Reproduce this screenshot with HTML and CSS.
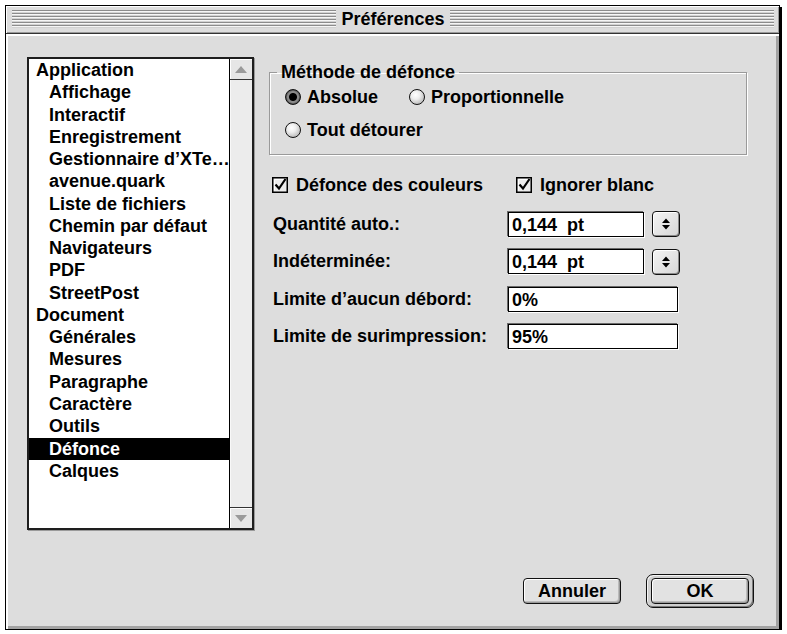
FILE: index.html
```html
<!DOCTYPE html>
<html lang="fr">
<head>
<meta charset="utf-8">
<title>Préférences</title>
<link rel="stylesheet" href="styles.css">
</head>
<body>
<div class="window">
  <div class="titlebar">
    <div class="stripes"><span class="title">Préférences</span></div>
  </div>
  <div class="body">
    <div class="listbox">
      <div class="list">
        <div class="item">Application</div>
        <div class="item child">Affichage</div>
        <div class="item child">Interactif</div>
        <div class="item child">Enregistrement</div>
        <div class="item child">Gestionnaire d’XTe…</div>
        <div class="item child">avenue.quark</div>
        <div class="item child">Liste de fichiers</div>
        <div class="item child">Chemin par défaut</div>
        <div class="item child">Navigateurs</div>
        <div class="item child">PDF</div>
        <div class="item child">StreetPost</div>
        <div class="item">Document</div>
        <div class="item child">Générales</div>
        <div class="item child">Mesures</div>
        <div class="item child">Paragraphe</div>
        <div class="item child">Caractère</div>
        <div class="item child">Outils</div>
        <div class="item child sel">Défonce</div>
        <div class="item child">Calques</div>
      </div>
      <div class="scrollbar">
        <div class="arrow up"><svg width="12" height="7" viewBox="0 0 12 7"><path d="M0 7 L6 0 L12 7 Z" fill="#9a9a9a"/></svg></div>
        <div class="track"></div>
        <div class="arrow down"><svg width="12" height="7" viewBox="0 0 12 7"><path d="M0 0 L6 7 L12 0 Z" fill="#9a9a9a"/></svg></div>
      </div>
    </div>

    <div class="panel">
      <fieldset class="group">
        <legend>Méthode de défonce</legend>
        <div class="radiorow">
          <label class="opt"><span class="radio on"></span>Absolue</label>
          <label class="opt"><span class="radio"></span>Proportionnelle</label>
        </div>
        <div class="radiorow second">
          <label class="opt"><span class="radio"></span>Tout détourer</label>
        </div>
      </fieldset>

      <div class="checkrow">
        <label class="opt check"><svg class="cb" width="16" height="16" viewBox="0 0 16 16"><rect x="0.75" y="0.75" width="14.5" height="14.5" fill="#ececec" stroke="#000" stroke-width="1.5"/><path d="M2.5 2.5 H13.5 M2.5 2.5 V13.5" stroke="#fff" stroke-width="1"/><path d="M3.5 7.5 L7 11.5 L13.5 2" fill="none" stroke="#000" stroke-width="2.2"/></svg>Défonce des couleurs</label>
        <label class="opt check"><svg class="cb" width="16" height="16" viewBox="0 0 16 16"><rect x="0.75" y="0.75" width="14.5" height="14.5" fill="#ececec" stroke="#000" stroke-width="1.5"/><path d="M2.5 2.5 H13.5 M2.5 2.5 V13.5" stroke="#fff" stroke-width="1"/><path d="M3.5 7.5 L7 11.5 L13.5 2" fill="none" stroke="#000" stroke-width="2.2"/></svg>Ignorer blanc</label>
      </div>

      <div class="form">
        <div class="row">
          <span class="label">Quantité auto.:</span>
          <span class="field short">0,144  pt</span>
          <span class="stepper"><svg width="10" height="14" viewBox="0 0 10 14"><path d="M1 6 L5 1.5 L9 6 Z M1 8 L5 12.5 L9 8 Z" fill="#000"/></svg></span>
        </div>
        <div class="row">
          <span class="label">Indéterminée:</span>
          <span class="field short">0,144  pt</span>
          <span class="stepper"><svg width="10" height="14" viewBox="0 0 10 14"><path d="M1 6 L5 1.5 L9 6 Z M1 8 L5 12.5 L9 8 Z" fill="#000"/></svg></span>
        </div>
        <div class="row">
          <span class="label">Limite d’aucun débord:</span>
          <span class="field long">0%</span>
        </div>
        <div class="row">
          <span class="label">Limite de surimpression:</span>
          <span class="field long">95%</span>
        </div>
      </div>

      <div class="buttons">
        <button class="btn">Annuler</button>
        <span class="default"><button class="btn">OK</button></span>
      </div>
    </div>
  </div>
</div>
</body>
</html>
```
FILE: styles.css
```css
* { box-sizing: border-box; }
html, body { margin: 0; background: #fff; }
body {
  font-family: "Liberation Sans", Arial, sans-serif;
  font-weight: bold;
  font-size: 18px;
  color: #000;
}

.window {
  margin: 5px 0 0 5px;
  width: 775px;
  height: 625px;
  border: 1px solid #000;
  box-shadow: 2px 2px 0 #000;
  background: #dddddd;
  display: flex;
  flex-direction: column;
}

.titlebar {
  height: 28px;
  padding: 4px 5px 0 6px;
  border-bottom: 1px solid #333;
  box-shadow: inset 1px 1px 0 #fff, inset -1px -1px 0 #999;
  flex: none;
}
.stripes {
  height: 18px;
  display: flex;
  align-items: center;
  justify-content: center;
  background: repeating-linear-gradient(to bottom, #8c8c8c 0 1px, #f6f6f6 1px 2px, #d2d2d2 2px 3px);
}
.title {
  background: #dddddd;
  padding: 0 5px;
  line-height: 18px;
}

.body {
  flex: 1;
  display: flex;
  align-items: flex-start;
  gap: 15px;
  padding: 23px 25px 21px 21px;
  box-shadow: inset 2px 2px 0 #fff, inset -3px -3px 0 #a2a2a2;
}

.listbox {
  width: 227px;
  height: 473px;
  border: 2px solid #1e1e1e;
  box-shadow: 1px 1px 0 #9a9a9a;
  display: flex;
  background: #fff;
  flex: none;
}
.list {
  width: 200px;
  padding-top: 0;
  overflow: hidden;
}
.item {
  line-height: 22.28px;
  height: 22.28px;
  padding-left: 7px;
  white-space: nowrap;
}
.item.child { padding-left: 20px; }
.item.sel { background: #000; color: #fff; }

.scrollbar {
  flex: 1;
  border-left: 1px solid #000;
  background: #eaeaea;
  display: flex;
  flex-direction: column;
}
.arrow {
  height: 21px;
  display: flex;
  align-items: center;
  justify-content: center;
  background: #e6e6e6;
  box-shadow: inset 1px 1px 0 #fff;
}
.arrow.up { border-bottom: 1px solid #333; }
.arrow.down { border-top: 1px solid #333; }
.track { flex: 1; background: #ececec; box-shadow: inset 1px 0 0 #f8f8f8; }

.panel {
  width: 485px;
  align-self: stretch;
  display: flex;
  flex-direction: column;
}

.group {
  margin: 4px 0 0 0;
  width: 478px;
  border: 1px solid #9a9a9a;
  box-shadow: inset 1px 1px 0 #fff, 1px 1px 0 #fff;
  padding: 3px 15px 13px 15px;
  min-inline-size: 0;
}
.group legend {
  padding: 0 4px;
  margin-left: -8px;
  line-height: 22px;
}

.radiorow {
  display: flex;
  align-items: center;
  gap: 31px;
  height: 22px;
}
.radiorow.second { margin-top: 11px; }

.opt {
  display: flex;
  align-items: center;
  gap: 6px;
  line-height: 22px;
  white-space: nowrap;
}
.radio {
  width: 16px;
  height: 16px;
  border-radius: 50%;
  border: 1px solid #111;
  background: radial-gradient(circle at 40% 35%, #ffffff 0, #eeeeee 35%, #a8a8a8 95%);
  flex: none;
}
.radio.on {
  background: radial-gradient(circle, #000 0 3.5px, #8a8a8a 4.5px 5.5px, #4a4a4a 7px);
}

.checkrow {
  display: flex;
  gap: 33px;
  margin-top: 19px;
  padding-left: 3px;
  height: 22px;
}
.opt.check { gap: 8px; }
.cb { flex: none; }

.form {
  margin-top: 15px;
  padding-left: 4px;
  display: flex;
  flex-direction: column;
  gap: 11.67px;
}
.row {
  display: flex;
  align-items: center;
  height: 26px;
}
.label { width: 235px; white-space: nowrap; }
.field {
  height: 25px;
  background: #fff;
  border: 1px solid #000;
  box-shadow: -1px -1px 0 #6a6a6a, 1px 1px 0 #fff;
  padding-left: 3px;
  line-height: 25px;
  white-space: pre;
}
.field.short { width: 136px; }
.field.long { width: 170px; }
.stepper {
  margin-left: 8px;
  width: 28px;
  height: 26px;
  border: 1px solid #111;
  border-radius: 4px;
  background: linear-gradient(135deg, #f4f4f4, #d6d6d6);
  box-shadow: inset 1px 1px 0 #fff, inset -1px -1px 0 #8a8a8a;
  display: flex;
  align-items: center;
  justify-content: center;
}

.buttons {
  margin-top: auto;
  display: flex;
  justify-content: flex-end;
  align-items: center;
  gap: 25px;
}
.btn {
  font: inherit;
  color: #000;
  width: 98px;
  height: 26px;
  border: 1px solid #111;
  border-radius: 4px;
  background: #e2e2e2;
  box-shadow: inset 1px 1px 0 #fff, inset -1px -1px 0 #999, inset -2px -2px 0 #bbb;
  padding: 0;
  line-height: 24px;
  text-align: center;
}
.default {
  width: 108px;
  height: 34px;
  border: 1px solid #111;
  border-radius: 7px;
  padding: 3px 4px;
  background: #cfcfcf;
  box-shadow: inset 1px 1px 0 #f4f4f4, inset -1px -1px 0 #7a7a7a;
  display: flex;
  align-items: center;
  justify-content: center;
}
```
